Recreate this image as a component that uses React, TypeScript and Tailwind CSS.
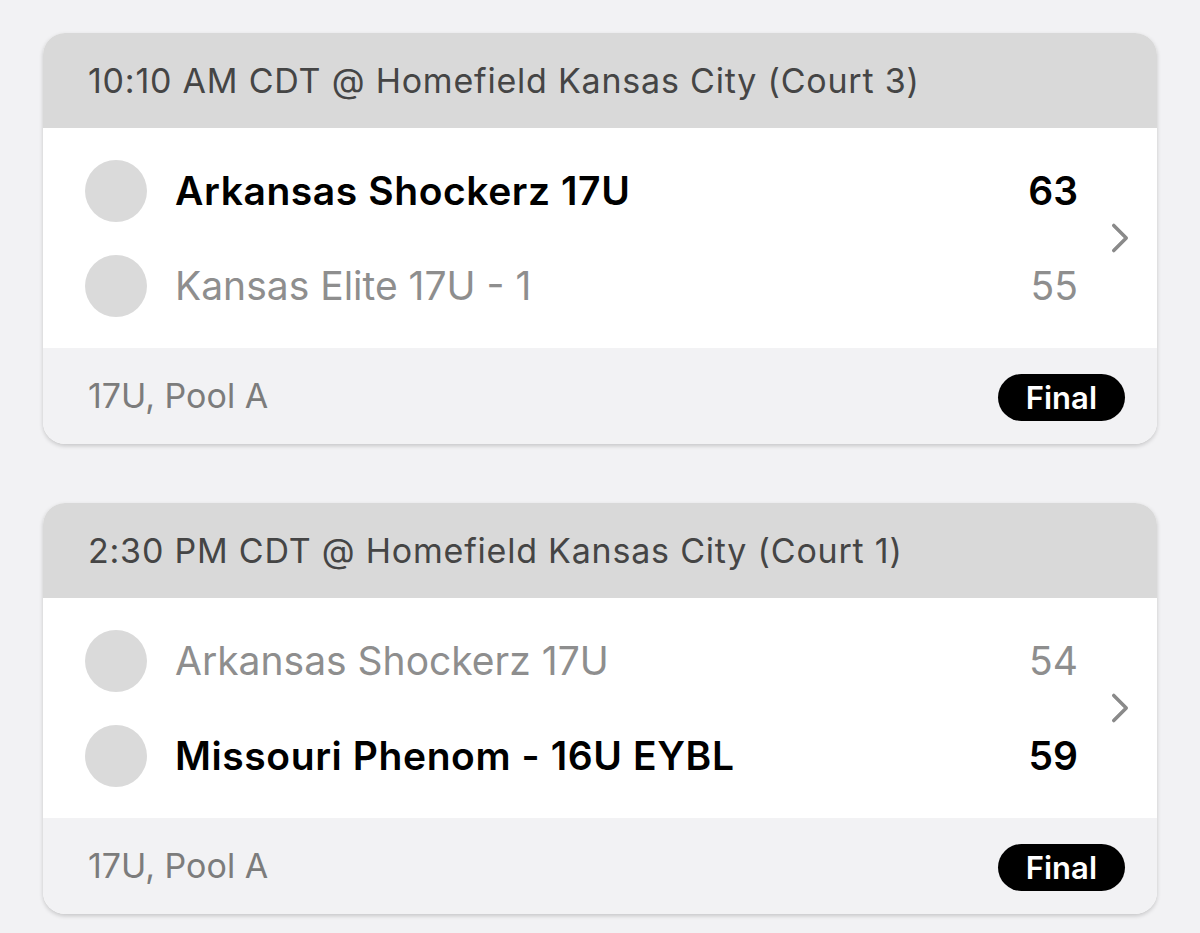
import { ChevronRight } from 'lucide-react'

interface Team {
  name: string
  score: number
  winner: boolean
}

interface Game {
  time: string
  venue: string
  teams: Team[]
  division: string
  status: string
}

const games: Game[] = [
  {
    time: '10:10 AM CDT',
    venue: 'Homefield Kansas City (Court 3)',
    teams: [
      { name: 'Arkansas Shockerz 17U', score: 63, winner: true },
      { name: 'Kansas Elite 17U - 1', score: 55, winner: false },
    ],
    division: '17U, Pool A',
    status: 'Final',
  },
  {
    time: '2:30 PM CDT',
    venue: 'Homefield Kansas City (Court 1)',
    teams: [
      { name: 'Arkansas Shockerz 17U', score: 54, winner: false },
      { name: 'Missouri Phenom - 16U EYBL', score: 59, winner: true },
    ],
    division: '17U, Pool A',
    status: 'Final',
  },
]

function GameCard({ game }: { game: Game }) {
  return (
    <div className="overflow-hidden rounded-[22px] bg-white shadow-[0_2px_4px_rgba(0,0,0,0.18)]">
      <div className="flex h-[95px] items-center bg-[#d9d9d9] pl-[45px] text-[34px] leading-none tracking-[0.023em] text-[#454545]">
        {game.time} @ {game.venue}
      </div>
      <div className="flex h-[220px] items-center pr-[12px]">
        <div className="flex flex-1 flex-col gap-[33px] pl-[42px]">
          {game.teams.map((team) => (
            <div key={team.name} className="flex items-center">
              <div className="h-[62px] w-[62px] shrink-0 rounded-full bg-[#dadada]" />
              <p
                className={`ml-[28px] flex-1 text-[39px] leading-none ${team.winner ? 'font-semibold tracking-[0.015em] text-black' : 'text-[#8e8e8e]'}`}
              >
                {team.name}
              </p>
              <p className={`text-[39px] leading-none ${team.winner ? 'font-semibold text-black' : 'text-[#8e8e8e]'}`}>
                {team.score}
              </p>
            </div>
          ))}
        </div>
        <ChevronRight className="ml-[17px] h-[50px] w-[50px] text-[#8a8a8a]" strokeWidth={1.7} />
      </div>
      <div className="flex h-[96px] items-center justify-between bg-[#f2f2f4] pl-[45px] pr-[32px]">
        <p className="text-[34px] leading-none text-[#7c7c7c]">{game.division}</p>
        <span className="mt-[2px] flex h-[47px] items-center rounded-full bg-black px-[28px] text-[31px] font-semibold leading-none text-white">
          {game.status}
        </span>
      </div>
    </div>
  )
}

export default function App() {
  return (
    <div className="min-h-[933px] bg-[#f2f2f4] px-[43px] pt-[33px] font-['Inter',sans-serif]">
      <div className="flex flex-col gap-[59px]">
        {games.map((game) => (
          <GameCard key={game.time} game={game} />
        ))}
      </div>
    </div>
  )
}
